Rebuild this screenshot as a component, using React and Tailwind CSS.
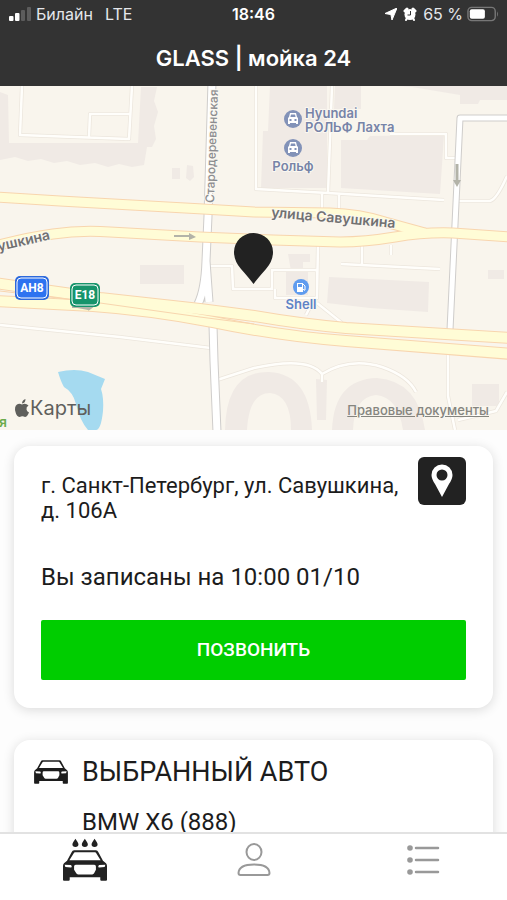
// src/App.jsx
//
// Booking screen of the car wash app: map, address card, selected car

import React from 'react';

// Car body, shared by the tab bar and the selected car card
const CarShape = () => (
  <path
    fillRule="evenodd"
    d="M33 34H98Q103 34 105 39L119 65L128 73Q131 76 131 81V122Q131 125 128 125H114Q111 125 111 122V114H20V122Q20 125 17 125H3Q0 125 0 122V81Q0 76 3 73L12 65L26 39Q28 34 33 34ZM36 40Q33 40 32 43L19 64H112L99 43Q98 40 95 40ZM5 77L7 84L23 85Q27 85 26 82L24 78ZM126 77L124 84L108 85Q104 85 105 82L107 78ZM38 77Q33 77 33 82V92L39 102Q41 106 45 106H87Q91 106 93 102L98 92V82Q98 77 93 77Z"
  />
);

const CarIcon = ({ className }) => (
  <svg viewBox="0 33 131 93" className={className} fill="currentColor" aria-hidden="true">
    <CarShape />
  </svg>
);

const CarWashIcon = ({ className }) => (
  <svg viewBox="0 0 131 126" className={className} fill="currentColor" aria-hidden="true">
    <path d="M37 0Q46 13 46 16A9 8 0 0 1 28 16Q28 13 37 0ZM65 0Q74 13 74 16A9 8 0 0 1 56 16Q56 13 65 0ZM94 0Q103 13 103 16A9 8 0 0 1 85 16Q85 13 94 0Z" />
    <CarShape />
  </svg>
);

const StatusBar = () => (
  <div className="grid grid-cols-3 items-center px-2 h-7 text-base leading-7 text-gray-200">
    <div className="flex items-center">
      <svg viewBox="0 0 24 14" className="w-6 h-3.5" aria-hidden="true">
        <rect x="1" y="9" width="4.500" height="5" rx="1" fill="#fff" />
        <rect x="7" y="6" width="4.500" height="8" rx="1" fill="#fff" />
        <rect x="13" y="3" width="4" height="11" rx="1" fill="#5c5c5c" />
        <rect x="19" y="0" width="4" height="14" rx="1" fill="#5c5c5c" />
      </svg>
      <span className="ml-1">Билайн</span>
      <span className="ml-3">LTE</span>
    </div>
    <span className="text-center font-semibold text-white">18:46</span>
    <div className="flex items-center justify-end whitespace-nowrap">
      <svg viewBox="0 0 12 12" className="w-3 h-3 mr-1.5 shrink-0" fill="#fff" aria-hidden="true">
        <path d="M12 0L7 12L5.900 6.600L0 5.500Z" stroke="#fff" strokeLinejoin="round" />
      </svg>
      <svg viewBox="0 0 14 14" className="w-3.5 h-3.5 mr-1.5 shrink-0" aria-hidden="true">
        <path d="M2 4L4 2M12 4L10 2" stroke="#fff" strokeWidth="3" strokeLinecap="round" />
        <path d="M3 13L4 11M11 13L10 11" stroke="#fff" strokeWidth="2" strokeLinecap="round" />
        <circle cx="7" cy="7.500" r="5.500" fill="#fff" />
        <path d="M7.500 4V8H4.500" fill="none" stroke="#333" />
      </svg>
      <span>65 %</span>
      <svg viewBox="0 0 34 16" className="w-8 h-4 ml-1 shrink-0" aria-hidden="true">
        <rect x="1" y="1" width="29" height="14" rx="4" fill="none" stroke="#777" strokeWidth="1.500" />
        <rect x="3" y="3" width="16" height="10" rx="2" fill="#fff" />
        <path d="M32 5Q34 8 32 11Z" fill="#777" />
      </svg>
    </div>
  </div>
);

// Round place marker with a little car in it
const DealerMarker = ({ x, y }) => (
  <g transform={`translate(${x} ${y})`}>
    <circle r="9" fill="#8292b8" />
    <path
      fill="#fff"
      fillRule="evenodd"
      d="M-3-6H3L4-2L5-1V5H3V4H-3V5H-5V-1L-4-2ZM-2-4.500L-2.600-2H2.600L2-4.500ZM-3.500 0V2H-1.500V0ZM1.500 0V2H3.500V0Z"
    />
  </g>
);

const roadA = 'M-5 111L60 115L203 123L254 126L330 127Q360 128 385 136L425 147';
const roadB = 'M-5 160Q30 151 53 148Q80 144 110 146L200 151L273 154L340 156Q365 156 395 151Q425 146 453 147L512 151';
const roadC = 'M-5 197L100 212L200 223L254 230Q300 238 346 242L512 252';
const roadD = 'M-5 215L93 220Q150 224 213 236Q280 250 346 255L512 268';
const sideStreets = 'M212 -4L208 130L206 175Q205 204 198 218M208 130L206 175L209 216M213 239L214 275L217 346';
const rightStreet = 'M512 32H460L457 96L450 244';
const footways = [
  'M22 0L20 49L129 53L132 0M89 51L90 28H130',
  'M256 0L256 103L328 107L444 114M332 0L328 107M322 107V122M339 108V126M390 48H446V72H457M318 159L317 210M362 159V178M391 159V169M341 178L440 183',
  'M209 180H232L233 203H272V184H317V212H275V203M317 217L342 237M312 217L306 229',
  'M0 239L120 251L211 262M217 294L254 282Q308 270 322 288Q350 271 382 281Q408 290 416 306M322 288V296M448 265V310L455 344M458 334L496 325L507 306M456 115H490Q497 113 507 90',
].join('');

const MapView = () => (
  <section className="relative h-86 shrink-0 overflow-hidden bg-[#f9f5ed]" aria-label="Карта">
    <svg viewBox="0 0 507 344" preserveAspectRatio="xMidYMid slice" className="block w-full h-full">
      {/* Buildings */}
      <g fill="#f0eae5">
        <path d="M0 6L8 9L9 57H138L141 1H157L154 15L158 26L154 40L156 53L152 61H147L144 79L132 81L119 78L108 81L95 77L80 79L67 75L54 77L41 73L28 75L15 71L0 74Z" />
        <path d="M172 82H180V93H172ZM187 79L193 80L194 91L190 95L186 92Z" />
        <path d="M270 0H327V102H261L263 45H268Z" />
        <path d="M335 0H361V23H334ZM397 0L412 1L460 9V18H478L480 14H507V0Z" />
        <path d="M341 54H367L370 50L444 49L440 108L341 102Z" />
        <path d="M140 179H184V198H140ZM288 168H310V176H303V184H308V209H286V185H291Z" />
        <path d="M329 191L429 196L428 226L370 222L327 217ZM488 184H504V193H488Z" />
        <path d="M472 298H499V320H472ZM316 293L327 294L326 334L317 334Z" />
        <path d="M225 344Q226 285 269 286Q310 288 312 344H291Q291 309 270 307Q249 307 247 344ZM332 344Q334 293 377 292Q418 295 425 344H403Q398 311 376 309Q354 311 353 344Z" />
      </g>

      {/* Yards and footways */}
      <g fill="none" strokeLinejoin="round">
        <path d={footways} stroke="#ece6dd" strokeWidth="4" />
        <path d={footways} stroke="#fffefb" strokeWidth="2.500" />
      </g>

      {/* Pond */}
      <path d="M58 286Q75 282 88 286L105 293L101 303Q104 312 103 325Q101 344 96 344H88Q80 335 76 318Q73 306 64 301Q61 296 58 286Z" fill="#a5daf0" />

      {/* Streets */}
      <g fill="none" strokeLinejoin="round">
        <path d={sideStreets} stroke="#cfcdcb" strokeWidth="9" />
        <path d={rightStreet} stroke="#cfcdcb" strokeWidth="7" />
        <path d={sideStreets} stroke="#fff" strokeWidth="7" />
        <path d={rightStreet} stroke="#fff" strokeWidth="5" />
      </g>

      {/* Main roads */}
      <g fill="none" strokeLinecap="butt">
        <g stroke="#f8d5ae">
          <path d={roadA} strokeWidth="11" />
          <path d={roadB} strokeWidth="11" />
          <path d={roadC} strokeWidth="12" />
          <path d={roadD} strokeWidth="12" />
        </g>
        <g stroke="#fffcd6">
          <path d={roadA} strokeWidth="9" />
          <path d={roadB} strokeWidth="9" />
          <path d={roadC} strokeWidth="10" />
          <path d={roadD} strokeWidth="10" />
        </g>
        <path d="M0 205L100 217L200 231L254 238" stroke="#f8d5ae" />
      </g>

      {/* One-way arrows */}
      <g fill="#b3b3a8" stroke="#b3b3a8">
        <path d="M174 150H190" strokeWidth="2" />
        <path d="M189 147L196 151L189 154Z" stroke="none" />
        <path d="M457 78V96" strokeWidth="3" />
        <path d="M453 94H461L457 101Z" stroke="none" />
        <path d="M72 221H92L88 224" strokeWidth="2" />
      </g>

      {/* Street names */}
      <g fontFamily="Inter, sans-serif" fill="#717172" stroke="#fbf8f1" strokeWidth="2" paintOrder="stroke" strokeLinejoin="round">
        <text transform="translate(214 117) rotate(-88)" fontSize="12" fontWeight="500" fill="#8c8c8f">Стародеревенская улица</text>
        <text transform="translate(271 131) rotate(5)" fontSize="14" fontWeight="600">улица Савушкина</text>
        <text transform="translate(-9 167) rotate(-13)" fontSize="14" fontWeight="600">вушкина</text>
      </g>

      {/* Places */}
      <DealerMarker x={293} y={33} />
      <DealerMarker x={293} y={62} />
      <g fontFamily="Inter, sans-serif" fontSize="13" fontWeight="600" fill="#7784a8" stroke="#fbf8f1" strokeWidth="2" paintOrder="stroke" strokeLinejoin="round">
        <text x="305" y="32">Hyundai</text>
        <text x="305" y="46">РОЛЬФ Лахта</text>
        <text x="293" y="85" textAnchor="middle">Рольф</text>
        <text x="301" y="223" textAnchor="middle" fill="#5e83c6">Shell</text>
      </g>
      <circle cx="301" cy="201" r="8" fill="#5f9cef" />
      <path fillRule="evenodd" fill="#fff" d="M297 197H303V206H297ZM298 198V201H302V198Z" />
      <path d="M303 198L305 200V204Q304 205 303 203" fill="none" stroke="#fff" />
      <text x="-9" y="341" fontFamily="Inter, sans-serif" fontSize="14" fontWeight="600" fill="#6cab4c">ая</text>

      {/* Route shields */}
      <g fontFamily="'Roboto', sans-serif" fontSize="12" fontWeight="700" fill="#fff" textAnchor="middle">
        <rect x="15" y="190" width="34" height="24" rx="5" fill="#2d69dc" />
        <rect x="17" y="192" width="30" height="20" rx="4" fill="#2e73f0" stroke="#fff" />
        <text x="32" y="206">АН8</text>
        <rect x="70" y="197" width="30" height="24" rx="5" fill="#17946b" />
        <rect x="72" y="199" width="26" height="20" rx="4" fill="#17946b" stroke="#fff" />
        <text x="85" y="213">E18</text>
      </g>

      {/* Car wash pin */}
      <path d="M253.500 198Q249 192 241 183Q234 175 234 166A19.500 19 0 0 1 273 166Q273 175 266 183Q258 192 253.500 198Z" fill="#222" />
    </svg>

    <div className="absolute left-3.5 bottom-2 flex items-center text-xl leading-7 text-[#5f5f5c]">
      <svg viewBox="0 0 15 18" className="w-4 h-4.5" fill="currentColor" aria-hidden="true">
        <path d="M11 0Q11 4 7.500 4.500Q7.500 1 11 0ZM7.500 5.500Q11 3.500 14 6.500Q11.500 8 12 10.500Q12.300 12.500 14.500 13.500Q12.500 18 10.500 18Q9 17 7.500 17.200L5 18Q2 17.500 1 13Q-0.500 8 2.500 5.600Q4.500 4.200 7.500 5.500Z" />
      </svg>
      <span>Карты</span>
    </div>
    <a href="#legal" className="absolute right-4.5 bottom-3 text-[13px] leading-4 font-medium text-[#85857f] underline">
      Правовые документы
    </a>
  </section>
);

const Card = ({ children, className }) => (
  <section className={`mx-3.5 rounded-2xl bg-white shadow-[0_2px_12px_rgba(0,0,0,0.14)] ${className}`}>
    {children}
  </section>
);

const AddressCard = () => (
  <Card className="mt-4 px-[27px] pt-[11px] pb-7">
    <div className="flex items-start justify-between">
      <p className="pt-4 text-[22px] leading-[25px]">
        г. Санкт-Петербург, ул. Савушкина,
        <br />
        д. 106А
      </p>
      <button
        type="button"
        aria-label="Показать на карте"
        className="flex h-12 w-12 shrink-0 items-center justify-center rounded-md bg-[#222]"
      >
        <svg viewBox="0 0 22 34" className="w-5.5 h-8.5" fill="#fff" aria-hidden="true">
          <path fillRule="evenodd" d="M11 0.500A10.500 10.500 0 0 1 21.500 11Q21.500 15 18 20L11 33L4 20Q0.500 15 0.500 11A10.500 10.500 0 0 1 11 0.500ZM11 5.500A5.500 5.500 0 1 0 11 16.500A5.500 5.500 0 1 0 11 5.500Z" />
        </svg>
      </button>
    </div>
    <p className="mt-10 text-2xl leading-7">Вы записаны на 10:00 01/10</p>
    <button type="button" className="mt-[29px] block h-15 w-full rounded-xs bg-[#00cd00] text-[19px] font-medium text-white">
      ПОЗВОНИТЬ
    </button>
  </Card>
);

const SelectedCarCard = () => (
  <Card className="mt-8 px-5 pt-4 pb-8">
    <div className="grid grid-cols-[34px_1fr] items-center gap-x-3.5">
      <CarIcon className="w-8.5 h-6" />
      <h2 className="text-[27px] leading-8">ВЫБРАННЫЙ АВТО</h2>
      <p className="col-start-2 mt-5 text-2xl leading-7">BMW X6 (888)</p>
    </div>
  </Card>
);

const TabBar = () => (
  <nav className="grid h-17 shrink-0 grid-cols-3 border-t-2 border-[#e2e2e2] bg-white pt-1 text-[#999]">
    <a href="#wash" aria-label="Мойка" className="flex h-11 items-center justify-center text-[#222]">
      <CarWashIcon className="w-11 h-11" />
    </a>
    <a href="#profile" aria-label="Профиль" className="flex h-11 items-center justify-center">
      <svg viewBox="0 0 34 34" className="w-8.5 h-8.5" fill="none" stroke="currentColor" strokeWidth="2" aria-hidden="true">
        <ellipse cx="17" cy="9" rx="7.500" ry="8" />
        <path d="M1.500 30Q2 21.500 17 21.500Q32 21.500 32.500 30Q32.500 32 30.500 32H3.500Q1.500 32 1.500 30Z" />
      </svg>
    </a>
    <a href="#orders" aria-label="Заказы" className="flex h-11 items-center justify-center">
      <svg viewBox="0 0 34 34" className="w-8.5 h-8.5" fill="currentColor" aria-hidden="true">
        <circle cx="4" cy="5" r="2.800" />
        <circle cx="4" cy="17" r="2.800" />
        <circle cx="4" cy="29" r="2.800" />
        <path d="M10 5H32M10 17H32M10 29H32" stroke="currentColor" strokeWidth="2.500" strokeLinecap="round" />
      </svg>
    </a>
  </nav>
);

export default function App() {
  return (
    <div className="flex h-screen flex-col overflow-hidden bg-[#fdfdfd] font-['Roboto',sans-serif] text-[#1c1c1c]">
      <header className="shrink-0 bg-[#333] pb-3 font-['Inter',sans-serif] text-white">
        <StatusBar />
        <h1 className="pt-3.5 text-center text-[22px] leading-8 font-semibold">GLASS | мойка 24</h1>
      </header>
      <main className="flex min-h-0 flex-1 flex-col overflow-hidden">
        <div className="shrink-0 font-['Inter',sans-serif]">
          <MapView />
        </div>
        <AddressCard />
        <SelectedCarCard />
      </main>
      <TabBar />
    </div>
  );
}
